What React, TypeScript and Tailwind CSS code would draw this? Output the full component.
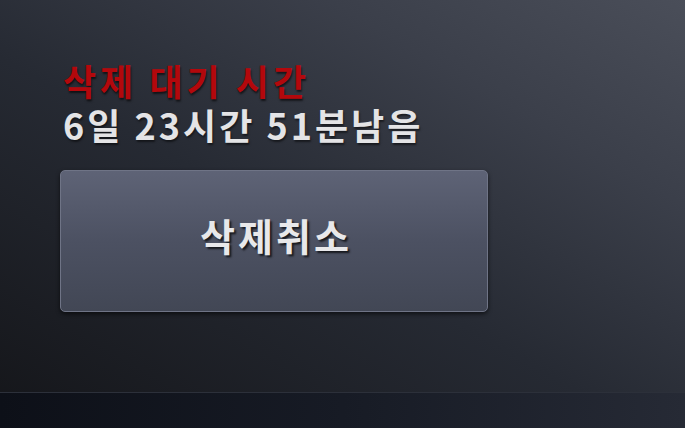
export default function App() {
  return (
    <div
      className="relative w-[685px] h-[428px] overflow-hidden flex flex-col bg-[linear-gradient(30deg,#141519_0%,#262a33_45%,#3b3f4a_75%,#4a4e59_100%)]"
      style={{ fontFamily: '"Noto Sans CJK KR", "Noto Sans", sans-serif' }}
    >
      {/* Main content */}
      <div className="flex-1 flex flex-col pl-[63px] pt-[58px]">
        <div className="text-[36px] leading-[44px] font-bold text-[#b3080c] tracking-[4px] [text-shadow:1px_2px_2px_rgba(0,0,0,0.6)]">
          삭제 대기 시간
        </div>
        <div className="text-[36px] leading-[44px] font-semibold text-[#e4e4e6] tracking-[3px] [text-shadow:1px_2px_2px_rgba(0,0,0,0.5)]">
          6일 23시간 51분남음
        </div>
        <button className="mt-[24px] ml-[-3px] w-[428px] h-[142px] rounded-[5px] border border-[#6f7486] bg-[linear-gradient(180deg,#5e6376_0%,#4c5162_50%,#424755_100%)] shadow-[0_2px_4px_rgba(0,0,0,0.6)] flex items-center justify-center">
          <span className="pb-[12px] pl-[4px] text-[38px] leading-[48px] font-semibold text-[#e8e8ea] tracking-[3px] [text-shadow:2px_2px_2px_rgba(0,0,0,0.7)]">
            삭제취소
          </span>
        </button>
      </div>
      {/* Bottom strip */}
      <div className="h-[36px] bg-[linear-gradient(90deg,#0d1018_0%,#171b25_50%,#262a35_100%)] border-t border-[#2c303a]" />
    </div>
  );
}
